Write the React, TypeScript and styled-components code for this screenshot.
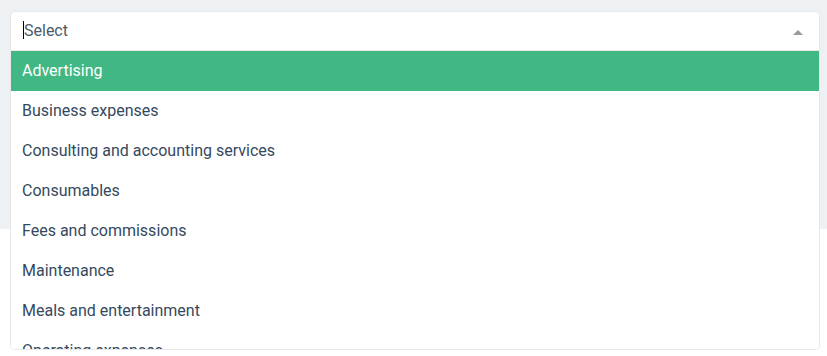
import styled, { createGlobalStyle } from 'styled-components';

const GlobalStyle = createGlobalStyle`
    html, body {
        margin: 0;
        padding: 0;
        background: #ffffff;
        font-family: Roboto, 'Liberation Sans', sans-serif;
    }
`;

const options = [
    'Advertising',
    'Business expenses',
    'Consulting and accounting services',
    'Consumables',
    'Fees and commissions',
    'Maintenance',
    'Meals and entertainment',
    'Operating expenses',
    'Rent',
    'Travel'
];

const StyledPage = styled.div`
    width: 827px;
    height: 356px;
    overflow: hidden;
    background: #ffffff;
`;

const StyledBand = styled.div`
    height: 229px;
    background: #eef1f4;
    padding: 11px 7px 0 10px;
    box-sizing: border-box;
`;

const StyledSelect = styled.div`
    position: relative;
    width: 810px;
`;

const StyledControl = styled.div`
    display: flex;
    align-items: center;
    justify-content: space-between;
    height: 40px;
    box-sizing: border-box;
    padding: 0 16px 2px 12px;
    background: #ffffff;
    border: 1px solid #e8e8e8;
    border-radius: 5px 5px 0 0;
`;

const StyledInput = styled.span`
    display: flex;
    align-items: center;
    font-size: 16px;
    color: #4a5a6a;
`;

const StyledCursor = styled.span`
    display: inline-block;
    width: 1px;
    height: 18px;
    margin-right: 0;
    background: #000000;
`;

const StyledCaret = styled.span`
    width: 0;
    height: 0;
    margin-top: 4px;
    border-left: 5px solid transparent;
    border-right: 5px solid transparent;
    border-bottom: 5px solid #999999;
`;

const StyledMenu = styled.ul`
    position: absolute;
    top: 40px;
    left: 0;
    right: 0;
    margin: 0;
    padding: 0;
    list-style: none;
    height: 299px;
    overflow: hidden;
    box-sizing: border-box;
    background: #ffffff;
    border: 1px solid #e8e8e8;
    border-top: none;
    border-radius: 0 0 5px 5px;
`;

const StyledOption = styled.li<{ $active?: boolean }>`
    display: flex;
    align-items: center;
    height: 40px;
    box-sizing: border-box;
    padding: 0 12px 2px 11px;
    font-size: 16px;
    color: ${({ $active }) => ($active ? '#ffffff' : '#35495e')};
    background: ${({ $active }) => ($active ? '#41b883' : '#ffffff')};
`;

export default function App() {
    return (
        <StyledPage>
            <GlobalStyle />
            <StyledBand>
                <StyledSelect>
                    <StyledControl>
                        <StyledInput>
                            <StyledCursor />
                            Select
                        </StyledInput>
                        <StyledCaret />
                    </StyledControl>
                    <StyledMenu>
                        {options.map((option, i) => (
                            <StyledOption key={option} $active={i === 0}>
                                {option}
                            </StyledOption>
                        ))}
                    </StyledMenu>
                </StyledSelect>
            </StyledBand>
        </StyledPage>
    );
}
